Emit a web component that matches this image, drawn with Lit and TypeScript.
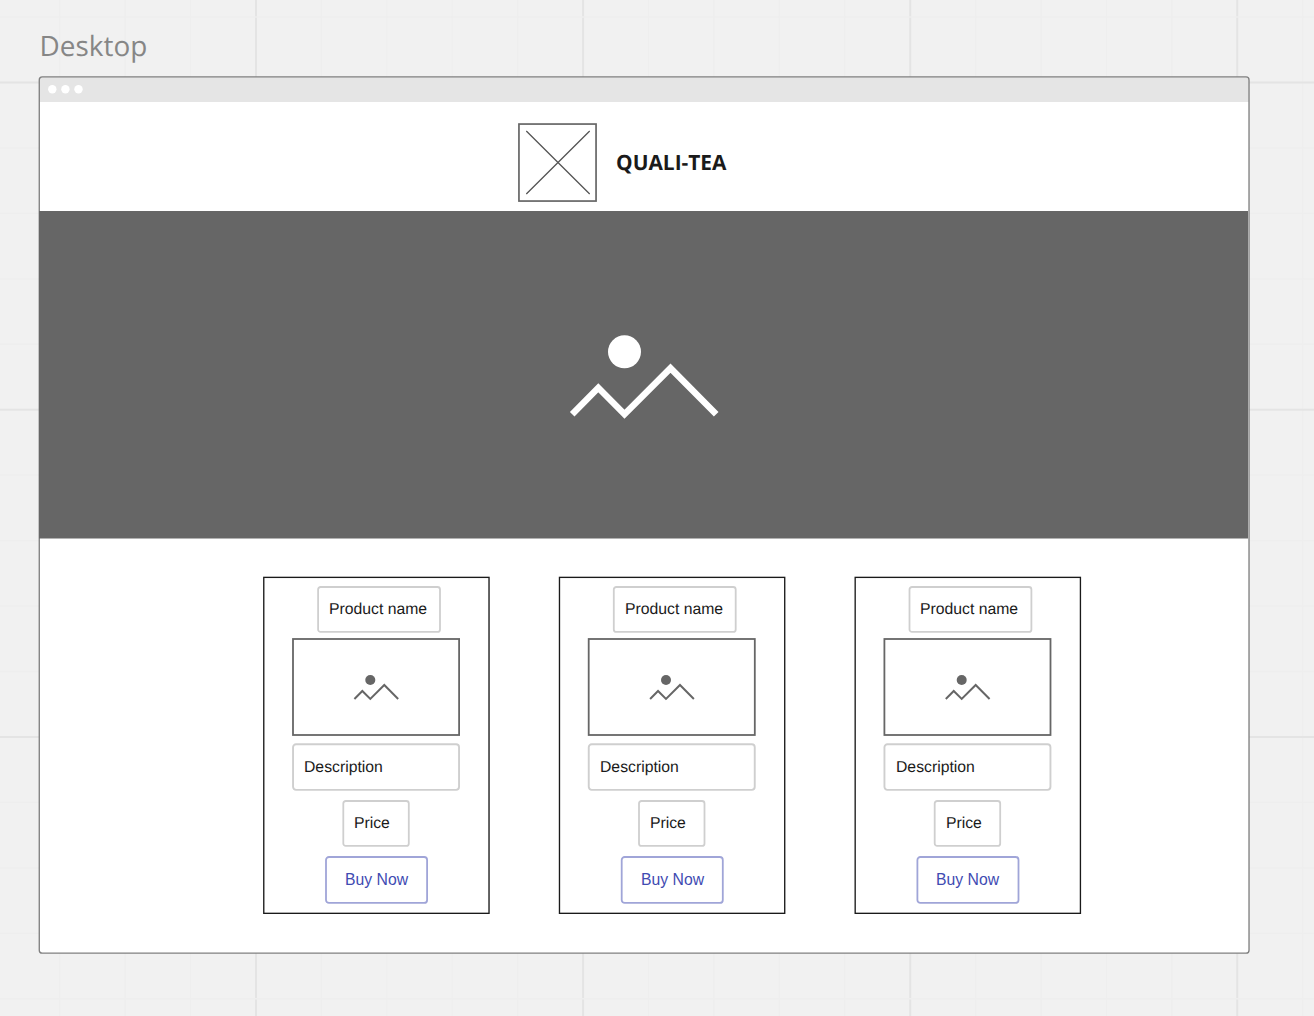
import { LitElement, html, svg, css } from "lit";
import { customElement, property } from "lit/decorators.js";

/** Outline drawn inside a box; coordinates are the outer edge of the stroke. */
const frame = (
  x: number, y: number, w: number, h: number,
  stroke: string, sw: number, r = 0,
) => html`<svg class="frame" aria-hidden="true">
  <rect x=${x + sw / 2} y=${y + sw / 2} width=${w - sw} height=${h - sw}
    rx=${r} fill="none" stroke=${stroke} stroke-width=${sw}></rect>
</svg>`;

/** Sun-and-mountains picture placeholder, origin at the sun's centre. */
const picture = (x: number, y: number, scale: number, color: string) => svg`
  <g transform="translate(${x} ${y}) scale(${scale})">
    <circle r="16.5" fill=${color}></circle>
    <polyline points="-52.3,62.4 -26.2,36 0,62.4 46,16.4 91.7,62.4"
      fill="none" stroke=${color} stroke-width="6.5"></polyline>
  </g>`;

const shared = css`
  * { box-sizing: border-box; }
  .frame { position: absolute; left: 0; top: 0; width: 100%; height: 100%; overflow: visible; pointer-events: none; }
`;

@customElement("product-card")
class ProductCard extends LitElement {
  @property({ type: Number }) shift = 0;

  static styles = [shared, css`
    :host { display: block; width: 226px; height: 338px; }
    .card {
      position: relative; height: 100%; padding-top: 10px;
      display: flex; flex-direction: column; align-items: center;
      font: 15.75px/18px "Liberation Sans", Arial, sans-serif; color: #1a1a1a;
      text-rendering: geometricPrecision;
    }
    .box { position: relative; display: flex; align-items: center; padding-left: 12px; white-space: nowrap; flex: none; }
    .name { width: 124px; height: 47px; margin-left: 6px; }
    .image { width: 168px; height: 98px; margin-top: 5px; }
    .desc { width: 168px; height: 48px; margin-top: 7px; padding-top: 2px; }
    .price { width: 68px; height: 47px; margin-top: 9px; }
    .buy {
      width: 102px; height: 48px; margin-top: 9px; padding: 0 0 0 20px; border: 0;
      background: none; font: inherit; color: #414bb2; text-align: left;
    }
    .label { position: relative; }
    .nudged .label { margin-left: 1px; }
    .half .desc .label, .half .price .label { margin-left: 1px; }
  `];

  render() {
    const s = this.shift;
    const gray = "#cfcfcf";
    return html`<div class="card ${s > 0.5 ? "nudged" : s > 0 ? "half" : ""}">
      ${frame(0.1 + s, 0.7, 226.6, 337.3, "#1a1a1a", 1.35)}
      <div class="box name">${frame(0.2 + s, 0.1, 123.7, 46.7, gray, 1.8, 2.5)}<span class="label">Product name</span></div>
      <div class="box image">
        ${frame(0.1 + s, 0.1, 167.9, 97.8, "#666", 1.8)}
        <svg class="frame">${picture(78.3 + s, 42, 0.304, "#666")}</svg>
      </div>
      <div class="box desc">${frame(0.1 + s, 0.3, 167.9, 47.5, gray, 1.9, 3)}<span class="label">Description</span></div>
      <div class="box price">${frame(0.4 + s, 0.1, 67.3, 46.7, gray, 1.8, 2.5)}<span class="label">Price</span></div>
      <button class="box buy">${frame(0.1 + s, 0.1, 102.9, 47.7, "#a0a5d8", 1.8, 3)}<span class="label">Buy Now</span></button>
    </div>`;
  }
}

@customElement("app-root")
class AppRoot extends LitElement {
  static styles = [shared, css`
    :host { display: block; }
    .canvas {
      position: relative; width: 1314px; height: 1016px; overflow: hidden;
      background: #f1f1f1; padding: 29px 0 0 39px;
      font-family: "Open Sans", sans-serif;
    }
    .title {
      position: relative; height: 48px; padding-left: 0.6px; font-size: 27.9px; line-height: 34px;
      color: #868686; text-rendering: geometricPrecision;
    }
    .window { position: relative; width: 1210px; height: 876px; background: #fff; border-radius: 3px; }
    .bar { height: 25px; background: #e5e5e5; border-radius: 3px 3px 0 0; }
    .bar svg { display: block; width: 60px; height: 25px; }
    .header { height: 109px; display: flex; align-items: flex-start; padding: 21px 0 0 479px; gap: 19px; }
    .logo { position: relative; width: 79px; height: 79px; }
    .brand {
      padding-top: 26px; font-size: 20.9px; line-height: 28px; font-weight: 700;
      color: #1a1a1a; white-space: nowrap; text-rendering: geometricPrecision;
    }
    .hero { position: relative; z-index: 1; width: 1209px; height: 328px; }
    .hero svg { display: block; width: 100%; height: 100%; }
    .products { display: flex; gap: 69px; padding: 37px 0 0 224px; }
    .products product-card + product-card + product-card { margin-left: 1px; }
  `];

  render() {
    const steps = Array.from({ length: 21 }, (_, i) => i);
    return html`<main class="canvas">
      <svg class="frame" aria-hidden="true">
        ${steps.map((i) => {
          const major = i % 5 === 4;
          const x = -5.7 + i * 65.42;
          const color = major ? "#e4e4e4" : "#eeeeee";
          return svg`<line x1=${x} x2=${x} y1="0" y2="1016" stroke=${color} stroke-width=${major ? 2 : 1.3}></line>`;
        })}
        ${steps.slice(0, 16).map((i) => {
          const major = i % 5 === 1;
          const y = 17 + i * 65.45;
          const color = major ? "#e4e4e4" : "#eeeeee";
          return svg`<line x1="0" x2="1314" y1=${y} y2=${y} stroke=${color} stroke-width=${major ? 2 : 1.3}></line>`;
        })}
      </svg>
      <div class="title">Desktop</div>
      <section class="window">
        <div class="bar">
          <svg aria-hidden="true">
            ${[13.3, 26.4, 39.5].map((cx) => svg`<circle cx=${cx} cy="12.2" r="4.2" fill="#fff"></circle>`)}
          </svg>
        </div>
        <header class="header">
          <div class="logo">
            ${frame(0.1, 0.2, 78.8, 78.7, "#666", 1.7)}
            <svg class="frame"><path d="M8.3 8L71.7 71M71.7 8L8.3 71" stroke="#555" stroke-width="1.3"></path></svg>
          </div>
          <div class="brand">QUALI-TEA</div>
        </header>
        <div class="hero">
          <svg>
            <rect width="1209" height="327.5" fill="#666"></rect>
            ${picture(585.5, 140.8, 1, "#fff")}
          </svg>
        </div>
        <div class="products">
          <product-card .shift=${0}></product-card>
          <product-card .shift=${0.7}></product-card>
          <product-card .shift=${0.4}></product-card>
        </div>
        ${frame(-0.4, -0.8, 1211.1, 877.6, "#808080", 1.35, 3)}
      </section>
    </main>`;
  }
}
